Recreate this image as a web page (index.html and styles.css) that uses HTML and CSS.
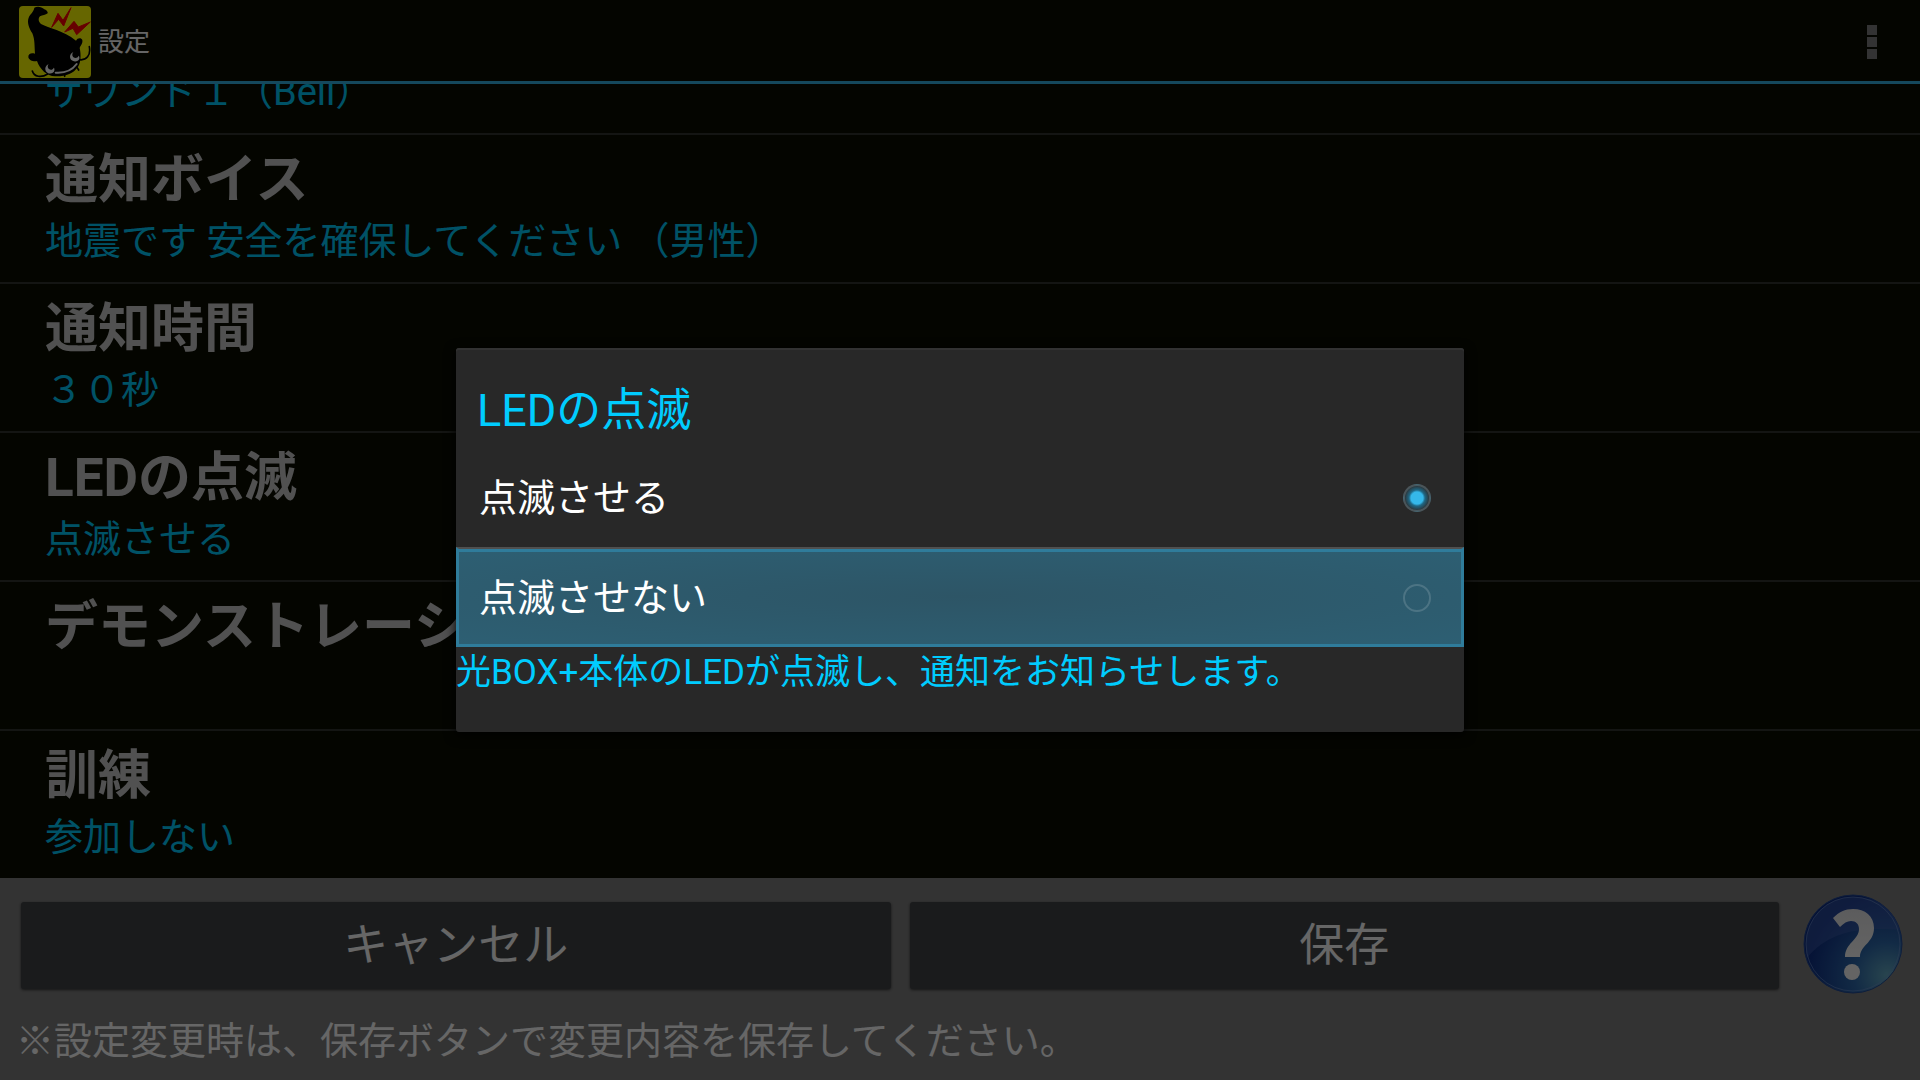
FILE: index.html
```html
<!DOCTYPE html>
<html lang="ja">
<head>
    <meta charset="UTF-8">
    <meta name="viewport" content="width=device-width, initial-scale=1.0">
    <title>設定</title>
    <link rel="stylesheet" href="styles.css">
</head>
<body>
    <header class="action-bar">
        <svg class="app-icon" viewBox="0 0 216 216" aria-hidden="true">
            <rect width="216" height="216" rx="12" fill="#ffff00"/>
            <!-- Catfish body and tail -->
            <path d="M46 5C55 0 68 2 76 10C84 13 87 18 86 22C80 27 70 27 63 31C57 37 58 47 66 54C90 68 132 72 171 104C175 95 187 94 190 102C192 113 184 119 182 126C187 148 185 172 176 184C163 203 140 212 108 211C84 211 62 189 54 165C45 168 29 163 28 153C28 143 36 140 48 143C46 118 48 102 40 82C29 64 24 48 29 35C34 23 44 18 46 5Z" fill="#000"/>
            <!-- Whiskers -->
            <path d="M181 161C202 164 216 148 211 122M40 195C45 213 67 216 86 204M137 202V211M174 184L179 192" fill="none" stroke="#000" stroke-width="5" stroke-linecap="round"/>
            <!-- Eyes and mouth -->
            <path d="M163 138C153 143 150 154 157 162C165 169 178 167 181 158C182 153 180 149 179 149C176 157 165 158 161 151C159 146 160 142 163 138Z" fill="#fff"/>
            <path d="M89 174C79 179 76 189 82 197C90 206 103 203 106 194C107 189 106 185 104 185C102 192 92 194 88 187C85 182 86 178 89 174Z" fill="#fff"/>
            <path d="M110 200C139 202 159 193 173 174" fill="none" stroke="#fff" stroke-width="6" stroke-linecap="round"/>
            <!-- Lightning -->
            <g fill="#ff0000" stroke="#ff0000" stroke-width="3" stroke-linejoin="round">
                <path d="M98 64L117 22L132 43L156 5L134 60L119 40Z"/>
                <path d="M137 78L165 46L178 63L214 48L173 86L162 67Z"/>
            </g>
        </svg>
        <h1>設定</h1>
        <button class="menu-button" aria-label="メニュー">
            <span></span>
            <span></span>
            <span></span>
        </button>
    </header>

    <main class="settings">
        <ul class="settings-list">
            <li>
                <h2>通知サウンド</h2>
                <p>サウンド１（Bell）</p>
            </li>
            <li>
                <h2>通知ボイス</h2>
                <p>地震です 安全を確保してください （男性）</p>
            </li>
            <li>
                <h2>通知時間</h2>
                <p>３０秒</p>
            </li>
            <li>
                <h2>LEDの点滅</h2>
                <p>点滅させる</p>
            </li>
            <li>
                <h2>デモンストレーション</h2>
                <p></p>
            </li>
            <li>
                <h2>訓練</h2>
                <p>参加しない</p>
            </li>
        </ul>
    </main>

    <footer class="bottom-bar">
        <div class="button-row">
            <button class="bar-button">キャンセル</button>
            <button class="bar-button">保存</button>
            <button class="help-button" aria-label="ヘルプ">
                <svg viewBox="0 0 100 100" aria-hidden="true">
                    <defs>
                        <radialGradient id="ball" cx="85%" cy="82%" r="85%">
                            <stop offset="0" stop-color="#66adc4"/>
                            <stop offset="0.4" stop-color="#2e6aad"/>
                            <stop offset="1" stop-color="#0d2c85"/>
                        </radialGradient>
                        <linearGradient id="mark" x1="0" y1="0" x2="0" y2="1">
                            <stop offset="0" stop-color="#e6e6e8"/>
                            <stop offset="1" stop-color="#fafafa"/>
                        </linearGradient>
                    </defs>
                    <circle cx="50" cy="50" r="49" fill="url(#ball)" stroke="#244a96" stroke-width="1"/>
                    <path d="M4 64C24 39 54 32 97 36C89 11 70 3 50 3C24 3 3 24 3 50C3 55 3 60 4 64Z" fill="#4060b0" fill-opacity="0.5"/>
                    <circle cx="50" cy="50" r="47" fill="none" stroke="#6f92cf" stroke-opacity="0.6" stroke-width="1"/>
                    <path d="M30 24C36 18 42 15 50 15C62 15 71 22 71 34C71 49 57 51 57 63H42C42 49 56 46 56 35C56 30 53 27 48 27C44 27 41 29 37 33Z" fill="url(#mark)"/>
                    <circle cx="49" cy="78" r="8" fill="#fafafa"/>
                </svg>
            </button>
        </div>
        <p class="note">※設定変更時は、保存ボタンで変更内容を保存してください。</p>
    </footer>

    <div class="overlay">
        <form class="dialog" role="dialog" aria-labelledby="dialogTitle">
            <h2 id="dialogTitle">LEDの点滅</h2>
            <div class="option">
                <label for="ledOn">点滅させる</label>
                <input type="radio" name="led" id="ledOn" checked>
            </div>
            <div class="option focused">
                <label for="ledOff">点滅させない</label>
                <input type="radio" name="led" id="ledOff">
            </div>
            <p>光BOX+本体のLEDが点滅し、通知をお知らせします。</p>
        </form>
    </div>
</body>
</html>
```

FILE: styles.css
```css
* {
    margin: 0;
    padding: 0;
    box-sizing: border-box;
}

body {
    display: flex;
    flex-direction: column;
    height: 100vh;
    overflow: hidden;
    background-color: #0b0d02;
    color: #fff;
    font-family: Roboto, "Noto Sans CJK JP", sans-serif;
}

button {
    border: none;
    background: none;
    color: inherit;
    font-family: inherit;
    cursor: pointer;
}

.action-bar {
    display: flex;
    align-items: center;
    flex-shrink: 0;
    height: 84px;
    padding: 3px 32px 0 19px;
    border-bottom: 3px solid #36b5e6;
}

.app-icon {
    width: 72px;
    height: 72px;
}

.action-bar h1 {
    flex: 1;
    margin-left: 7px;
    font-size: 26px;
    font-weight: 400;
    line-height: 32px;
}

.menu-button {
    display: flex;
    flex-direction: column;
    gap: 2px;
    padding: 0 11px;
}

.menu-button span {
    width: 10px;
    height: 10px;
    background-color: #808080;
}

/* The list is scrolled to its end, so the first row is cut off */
.settings {
    display: flex;
    flex: 1;
    flex-direction: column;
    justify-content: flex-end;
    min-height: 0;
    overflow: hidden;
}

.settings-list {
    list-style: none;
}

.settings-list li {
    padding: 14px 45px 11px;
    border-top: 2px solid #333530;
}

.settings-list h2 {
    font-size: 53px;
    line-height: 62px;
    color: #cacaca;
}

.settings-list p {
    min-height: 60px;
    font-size: 38px;
    line-height: 60px;
    color: #00ccff;
}

.bottom-bar {
    flex-shrink: 0;
    padding: 15px 17px 8px 16px;
    background-color: #808080;
}

.button-row {
    display: flex;
    align-items: center;
    gap: 19px;
    padding-left: 5px;
}

.bar-button {
    flex: 1;
    height: 87px;
    padding-top: 2px;
    border-radius: 3px;
    background-color: #434548;
    box-shadow: 0 1px 3px rgba(0, 0, 0, 0.6);
    font-size: 45px;
    line-height: 62px;
}

.help-button {
    width: 105px;
    height: 104px;
    text-align: right;
}

.help-button svg {
    width: 100px;
    height: 100px;
}

.note {
    padding-top: 13px;
    font-size: 38px;
    line-height: 62px;
}

.overlay {
    position: absolute;
    inset: 0;
    display: flex;
    align-items: center;
    justify-content: center;
    background-color: rgba(0, 0, 0, 0.6);
}

.dialog {
    width: 52.5%;
    border-radius: 3px;
    background-color: #282828;
    box-shadow: 0 3px 12px #000, inset 0 2px #323232;
}

.dialog h2 {
    padding: 32px 21px 7px;
    font-size: 45px;
    font-weight: 400;
    line-height: 62px;
    color: #00ccff;
}

.option {
    display: flex;
    align-items: center;
    height: 98px;
    padding: 0 33px 0 23px;
}

.option label {
    flex: 1;
    font-size: 38px;
    line-height: 60px;
}

.option.focused {
    height: 100px;
    border: 3px solid #2f7c9b;
    border-top: 2px solid #505050;
    padding: 3px 30px 0 20px;
    background: radial-gradient(ellipse at center, #2d5566, #2d5f73);
    box-shadow: inset 0 3px #2f7c9b;
}

.option input {
    appearance: none;
    width: 28px;
    height: 28px;
    border: 2px solid rgba(255, 255, 255, 0.15);
    border-radius: 50%;
}

.option input:checked {
    background: radial-gradient(circle, #35b8ea 6px, #1f6784 8px, #2b383e 12px);
}

.dialog p {
    padding-bottom: 33px;
    font-size: 35px;
    line-height: 52px;
    color: #00ccff;
}
```
